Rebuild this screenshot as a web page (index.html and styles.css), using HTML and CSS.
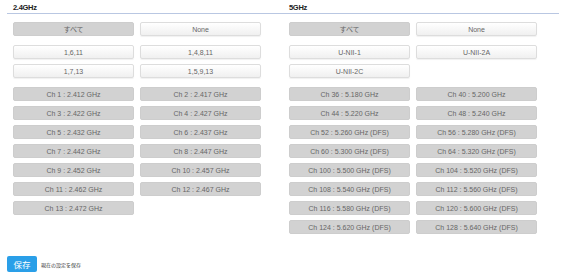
FILE: index.html
```html
<!DOCTYPE html>
<html lang="ja">
<head>
    <meta charset="UTF-8">
    <meta name="viewport" content="width=device-width, initial-scale=1.0">
    <title>チャンネル設定</title>
    <link rel="stylesheet" href="styles.css">
</head>
<body>
    <div class="panel">
        <div class="band">
            <h2 class="band-title">2.4GHz</h2>
            <div class="btn-grid">
                <button class="ch-btn on">すべて</button>
                <button class="ch-btn">None</button>
            </div>
            <div class="btn-grid">
                <button class="ch-btn">1,6,11</button>
                <button class="ch-btn">1,4,8,11</button>
                <button class="ch-btn">1,7,13</button>
                <button class="ch-btn">1,5,9,13</button>
            </div>
            <div class="btn-grid">
                <button class="ch-btn on">Ch 1 : 2.412 GHz</button>
                <button class="ch-btn on">Ch 2 : 2.417 GHz</button>
                <button class="ch-btn on">Ch 3 : 2.422 GHz</button>
                <button class="ch-btn on">Ch 4 : 2.427 GHz</button>
                <button class="ch-btn on">Ch 5 : 2.432 GHz</button>
                <button class="ch-btn on">Ch 6 : 2.437 GHz</button>
                <button class="ch-btn on">Ch 7 : 2.442 GHz</button>
                <button class="ch-btn on">Ch 8 : 2.447 GHz</button>
                <button class="ch-btn on">Ch 9 : 2.452 GHz</button>
                <button class="ch-btn on">Ch 10 : 2.457 GHz</button>
                <button class="ch-btn on">Ch 11 : 2.462 GHz</button>
                <button class="ch-btn on">Ch 12 : 2.467 GHz</button>
                <button class="ch-btn on">Ch 13 : 2.472 GHz</button>
            </div>
        </div>

        <div class="band">
            <h2 class="band-title">5GHz</h2>
            <div class="btn-grid">
                <button class="ch-btn on">すべて</button>
                <button class="ch-btn">None</button>
            </div>
            <div class="btn-grid">
                <button class="ch-btn">U-NII-1</button>
                <button class="ch-btn">U-NII-2A</button>
                <button class="ch-btn">U-NII-2C</button>
            </div>
            <div class="btn-grid">
                <button class="ch-btn on">Ch 36 : 5.180 GHz</button>
                <button class="ch-btn on">Ch 40 : 5.200 GHz</button>
                <button class="ch-btn on">Ch 44 : 5.220 GHz</button>
                <button class="ch-btn on">Ch 48 : 5.240 GHz</button>
                <button class="ch-btn on">Ch 52 : 5.260 GHz (DFS)</button>
                <button class="ch-btn on">Ch 56 : 5.280 GHz (DFS)</button>
                <button class="ch-btn on">Ch 60 : 5.300 GHz (DFS)</button>
                <button class="ch-btn on">Ch 64 : 5.320 GHz (DFS)</button>
                <button class="ch-btn on">Ch 100 : 5.500 GHz (DFS)</button>
                <button class="ch-btn on">Ch 104 : 5.520 GHz (DFS)</button>
                <button class="ch-btn on">Ch 108 : 5.540 GHz (DFS)</button>
                <button class="ch-btn on">Ch 112 : 5.560 GHz (DFS)</button>
                <button class="ch-btn on">Ch 116 : 5.580 GHz (DFS)</button>
                <button class="ch-btn on">Ch 120 : 5.600 GHz (DFS)</button>
                <button class="ch-btn on">Ch 124 : 5.620 GHz (DFS)</button>
                <button class="ch-btn on">Ch 128 : 5.640 GHz (DFS)</button>
            </div>
        </div>
    </div>

    <div class="save-bar">
        <button class="save-btn">保存</button>
        <span class="save-note">現在の設定を保存</span>
    </div>
</body>
</html>
```

FILE: styles.css
```css
body {
    margin: 0;
    background-color: #ffffff;
    font-family: "Liberation Sans", "Noto Sans CJK JP", sans-serif;
    color: #555555;
}
.panel {
    display: grid;
    grid-template-columns: 276px 276px;
    margin-left: 7px;
}
.band-title {
    margin: 0;
    padding: 4px 0 1px 6px;
    font-size: 7.5px;
    line-height: 8px;
    font-weight: bold;
    letter-spacing: -0.3px;
    color: #222222;
    border-bottom: 1px solid #b9c7e2;
}
.btn-grid {
    display: grid;
    grid-template-columns: 121px 121px;
    column-gap: 6px;
    row-gap: 5px;
    padding-left: 6px;
    margin-top: 9px;
}
.band-title + .btn-grid {
    margin-top: 8px;
}
.ch-btn {
    height: 14px;
    padding: 0;
    margin: 0;
    font-family: inherit;
    font-size: 7px;
    color: #666666;
    border: 1px solid #dddddd;
    border-radius: 2px;
    background: linear-gradient(#ffffff, #f0f0f0);
    box-shadow: 0 1px 1px rgba(0, 0, 0, 0.06);
}
.ch-btn.on {
    background: #d2d2d2;
    border-color: #cdcdcd;
    box-shadow: none;
}
.save-bar {
    display: flex;
    align-items: center;
    gap: 4px;
    margin: 22px 0 0 7px;
}
.save-btn {
    width: 30px;
    height: 16px;
    padding: 0;
    border: none;
    border-radius: 2px;
    background-color: #2a9fe8;
    color: #ffffff;
    font-family: inherit;
    font-size: 8.5px;
}
.save-note {
    font-size: 5px;
    color: #333333;
}
```
